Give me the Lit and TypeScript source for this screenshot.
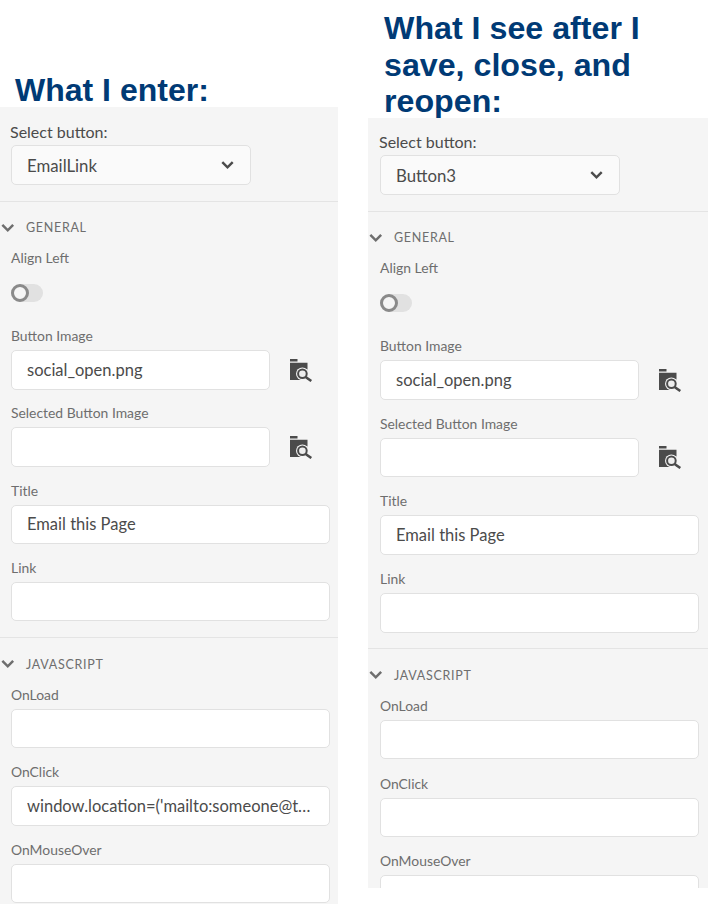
import { LitElement, html, css } from "lit";
import { customElement, property } from "lit/decorators.js";

const chevron = (cls: string) => html`<svg class=${cls} viewBox="0 0 14 10" aria-hidden="true"><path d="M1.4 1.8 7 7.4 12.6 1.8" fill="none" stroke="currentColor" stroke-width="2.6"/></svg>`;

const browse = html`<svg class="browse" viewBox="0 0 24 24" aria-hidden="true">
  <path fill="#4b4b4b" d="M1 1h7.5v2.6H1zM1 4.8h17.5V22H1z"/>
  <circle cx="13.4" cy="15.8" r="6.4" fill="#f5f5f5"/>
  <path d="M18 20 18.5 22H13zM18.5 11.5V15l-2-3.5z" fill="#f5f5f5"/>
  <circle cx="13.4" cy="15.8" r="4.3" fill="#eeeeee" stroke="#4b4b4b" stroke-width="2"/>
  <path d="M16.6 19 22.3 23" fill="none" stroke="#4b4b4b" stroke-width="2.6"/>
</svg>`;

@customElement("prop-panel")
class PropPanel extends LitElement {
  @property() selected = "";
  @property() onclickValue = "";

  static styles = css`
    :host {
      display: block;
      height: 100%;
      background: #f5f5f5;
      overflow: hidden;
      font-family: Lato, sans-serif;
      color: #4b4b4b;
    }
    .top { padding: var(--top, 16px) 0 15.5px var(--inset, 11px); border-bottom: 1px solid #e4e4e4; }
    .top label { display: block; font-size: 16px; line-height: 20px; margin: -1px 0 3px -1px; color: #4b4b4b; }
    .select {
      box-sizing: border-box;
      width: 240px;
      height: 40px;
      display: flex;
      align-items: center;
      justify-content: space-between;
      padding: 0 15px;
      background: #fafafa;
      border: 1px solid #e1e1e1;
      border-radius: 5px;
      font-size: 16.8px;
    }
    .select .chev { width: 13px; height: 10px; color: #4b4b4b; margin-right: 1px; }
    .section { padding: 17px var(--end, 8px) 0 var(--inset, 11px); }
    .section + .section { border-top: 1px solid #e4e4e4; margin-top: var(--sec, 15.8px); padding-top: var(--sec-top, 17px); }
    .head {
      display: flex;
      align-items: center;
      gap: 11.5px;
      margin-left: calc(0px - var(--inset, 11px) + 1px);
      height: 18px;
      font-size: 12.5px;
      letter-spacing: 0.7px;
      color: #6e6e6e;
    }
    .head .chev { width: 13.5px; height: 10px; color: #6e6e6e; }
    .field-label {
      display: block;
      font-size: 13.9px;
      line-height: 18px;
      color: #6e6e6e;
      margin-top: var(--gap, 14.8px);
      margin-bottom: 5px;
    }
    .head + .field-label { margin-top: 12.5px; }
    .toggle {
      display: block;
      position: relative;
      width: 32px;
      height: 18px;
      margin: 17px 0 25px;
      border-radius: 9px;
      background: #e1e1e1;
    }
    .toggle::before {
      content: "";
      position: absolute;
      left: 0;
      top: 0;
      box-sizing: border-box;
      width: 18px;
      height: 18px;
      border-radius: 50%;
      background: #f5f5f5;
      border: 3.5px solid #8a8a8a;
    }
    .row { display: flex; align-items: center; }
    input {
      box-sizing: border-box;
      width: 100%;
      height: 39.5px;
      padding: 0 15px;
      background: #fff;
      border: 1px solid #e1e1e1;
      border-radius: 5px;
      font: inherit;
      font-size: 16.5px;
      color: #4b4b4b;
      text-overflow: ellipsis;
      outline: none;
      display: block;
    }
    .row input { width: 259px; flex: none; }
    .browse { width: 24px; height: 24px; margin-left: 19px; flex: none; }
  `;

  private field(label: string, value = "", browseBtn = false) {
    return html`<label class="field-label">${label}</label>
      ${browseBtn
        ? html`<div class="row"><input readonly .value=${value} />${browse}</div>`
        : html`<input readonly .value=${value} />`}`;
  }

  render() {
    return html`
      <div class="top">
        <label>Select button:</label>
        <div class="select"><span>${this.selected}</span>${chevron("chev")}</div>
      </div>
      <div class="section">
        <div class="head">${chevron("chev")}<span>GENERAL</span></div>
        <label class="field-label">Align Left</label>
        <span class="toggle"></span>
        ${this.field("Button Image", "social_open.png", true)}
        ${this.field("Selected Button Image", "", true)}
        ${this.field("Title", "Email this Page")}
        ${this.field("Link")}
      </div>
      <div class="section">
        <div class="head">${chevron("chev")}<span>JAVASCRIPT</span></div>
        ${this.field("OnLoad")}
        ${this.field("OnClick", this.onclickValue)}
        ${this.field("OnMouseOver")}
      </div>
    `;
  }
}

@customElement("app-root")
class AppRoot extends LitElement {
  static styles = css`
    :host {
      display: flex;
      width: 718px;
      height: 904px;
      overflow: hidden;
      background: #fff;
      gap: 30px;
    }
    .col { display: flex; flex-direction: column; flex: none; }
    .left { width: 338px; height: 904px; }
    .right { width: 340px; height: 888px; }
    h2 {
      margin: 0;
      box-sizing: border-box;
      font-family: "Liberation Sans", Arial, sans-serif;
      font-weight: 700;
      font-size: 32.2px;
      line-height: 36.5px;
      color: #003a75;
      flex: none;
    }
    .left h2 { height: 107px; padding: 72px 0 0 15px; font-size: 32px; }
    .right h2 { height: 118px; padding: 10px 40px 0 16px; }
    prop-panel { flex: 1; min-height: 0; --sec-top: 17.3px; }
    .right prop-panel { --inset: 12px; --top: 15px; --end: 9px; --gap: 15.2px; --sec: 15.4px; --sec-top: 17.4px; }
  `;

  render() {
    return html`
      <div class="col left">
        <h2>What I enter:</h2>
        <prop-panel selected="EmailLink" onclickValue="window.location=('mailto:someone@test.com?subject=Link&body='+document.URL)"></prop-panel>
      </div>
      <div class="col right">
        <h2>What I see after I save, close, and reopen:</h2>
        <prop-panel selected="Button3"></prop-panel>
      </div>
    `;
  }
}
